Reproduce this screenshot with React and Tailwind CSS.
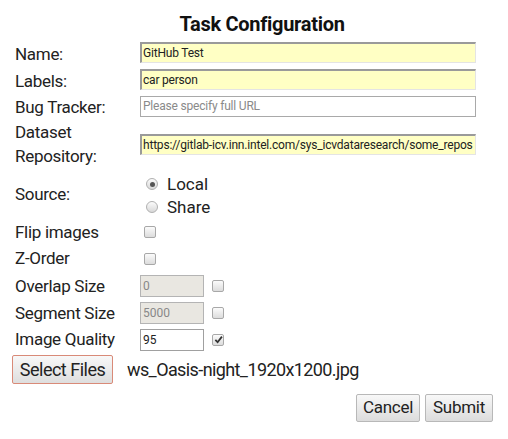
import React from "react";

const font = { fontFamily: "Roboto, 'Noto Sans', sans-serif" };

function Label({ children, className = "" }) {
  return (
    <div className={`w-[125px] shrink-0 pl-[15px] text-[17px] leading-[23px] tracking-[-0.3px] text-[#222] ${className}`}>
      {children}
    </div>
  );
}

function YellowInput({ value }) {
  return (
    <div className="h-[21px] w-[336px] overflow-hidden whitespace-nowrap border-t-2 border-l-2 border-r border-b border-t-[#9a9a9a] border-l-[#9a9a9a] border-r-[#e4e4e4] border-b-[#e4e4e4] bg-[#ffffc4] pl-[1px] text-[12px] leading-[18px] tracking-[-0.2px] text-[#222]">
      {value}
    </div>
  );
}

function Check({ checked = false, className = "" }) {
  return (
    <span className={`flex h-[12px] w-[12px] items-center justify-center rounded-[2px] border border-[#a8a8a8] bg-gradient-to-b from-[#fbfbfb] to-[#dcdcdc] ${className}`}>
      {checked && (
        <svg width="9" height="9" viewBox="0 0 10 10">
          <path d="M1.5 5.5 L4 8 L8.8 1.8" fill="none" stroke="#333" strokeWidth="2" />
        </svg>
      )}
    </span>
  );
}

function Radio({ checked = false }) {
  return (
    <span className="flex h-[12px] w-[12px] items-center justify-center rounded-full border border-[#b0b0b0] bg-gradient-to-b from-[#fbfbfb] to-[#d8d8d8]">
      {checked && <span className="h-[5px] w-[5px] rounded-full bg-[#555]" />}
    </span>
  );
}

export default function App() {
  return (
    <div className="h-[439px] w-[508px] bg-white text-[#222]" style={font}>
      <div className="pt-[10px]">
        <div className="h-[29px] pl-[16px] text-center text-[20px] font-bold leading-[29px] tracking-[-0.3px] text-[#111]">
          Task Configuration
        </div>

        <div className="flex h-[27px] items-center">
          <Label className="pt-[4px]">Name:</Label>
          <div className="pl-[15px]"><YellowInput value="GitHub Test" /></div>
        </div>
        <div className="flex h-[27px] items-center">
          <Label className="pt-[3px]">Labels:</Label>
          <div className="pl-[15px]"><YellowInput value="car person" /></div>
        </div>
        <div className="flex h-[27px] items-center">
          <Label className="pt-[2px]">Bug Tracker:</Label>
          <div className="pl-[15px]">
            <div className="h-[21px] w-[336px] border border-[#a9a9a9] bg-white pl-[2px] text-[12px] leading-[19px] tracking-[-0.2px] text-[#8a8a8a]">
              Please specify full URL
            </div>
          </div>
        </div>
        <div className="flex h-[48px] items-center">
          <Label className="leading-[24px]">
            Dataset
            <br />
            Repository:
          </Label>
          <div className="pl-[15px]">
            <YellowInput value="https://gitlab-icv.inn.intel.com/sys_icvdataresearch/some_repos" />
          </div>
        </div>
        <div className="flex h-[50px] items-center">
          <Label className="pt-[2px]">Source:</Label>
          <div className="flex flex-col pl-[21px] pt-[5px] text-[17px] leading-[23px]">
            <div className="flex items-center gap-[9px]">
              <Radio checked />
              <span>Local</span>
            </div>
            <div className="flex items-center gap-[9px]">
              <Radio />
              <span>Share</span>
            </div>
          </div>
        </div>
        <div className="flex h-[27px] items-center">
          <Label className="pt-[2px]">Flip images</Label>
          <div className="pl-[19px]"><Check /></div>
        </div>
        <div className="flex h-[27px] items-center">
          <Label>Z-Order</Label>
          <div className="pl-[19px]"><Check /></div>
        </div>
        <div className="flex h-[28px] items-center">
          <Label>Overlap Size</Label>
          <div className="flex items-center pl-[15px]">
            <div className="h-[22px] w-[64px] border border-[#b4b4b4] bg-[#e9e7e1] pl-[2px] text-[12px] leading-[20px] text-[#888]">0</div>
            <Check className="ml-[8px]" />
          </div>
        </div>
        <div className="flex h-[26px] items-center">
          <Label>Segment Size</Label>
          <div className="flex items-center pl-[15px]">
            <div className="h-[22px] w-[64px] border border-[#b4b4b4] bg-[#e9e7e1] pl-[2px] text-[12px] leading-[20px] text-[#888]">5000</div>
            <Check className="ml-[8px]" />
          </div>
        </div>
        <div className="flex h-[27px] items-center">
          <Label>Image Quality</Label>
          <div className="flex items-center pl-[15px]">
            <div className="h-[22px] w-[64px] border border-[#a0a0a0] bg-white pl-[2px] text-[12px] leading-[20px] text-[#222]">95</div>
            <Check checked className="ml-[8px]" />
          </div>
        </div>

        <div className="mt-[2px] flex items-center">
          <div className="ml-[12px] flex h-[29px] w-[101px] items-center justify-center rounded-[2px] border border-[#d98a78] bg-gradient-to-b from-[#f8f8f8] to-[#dedede] text-[18px] tracking-[-0.5px] text-[#222]">
            Select Files
          </div>
          <span className="ml-[14px] text-[18px] tracking-[-0.6px] text-[#222]">ws_Oasis-night_1920x1200.jpg</span>
        </div>

        <div className="mt-[10px] flex justify-end gap-[5px] pr-[15px]">
          <div className="flex h-[28px] w-[64px] items-center justify-center rounded-[2px] border border-[#b8b8b8] bg-gradient-to-b from-[#f8f8f8] to-[#dcdcdc] text-[17px] tracking-[-0.3px]">
            Cancel
          </div>
          <div className="flex h-[28px] w-[68px] items-center justify-center rounded-[2px] border border-[#b8b8b8] bg-gradient-to-b from-[#f8f8f8] to-[#dcdcdc] text-[17px] tracking-[-0.3px]">
            Submit
          </div>
        </div>
      </div>
    </div>
  );
}
